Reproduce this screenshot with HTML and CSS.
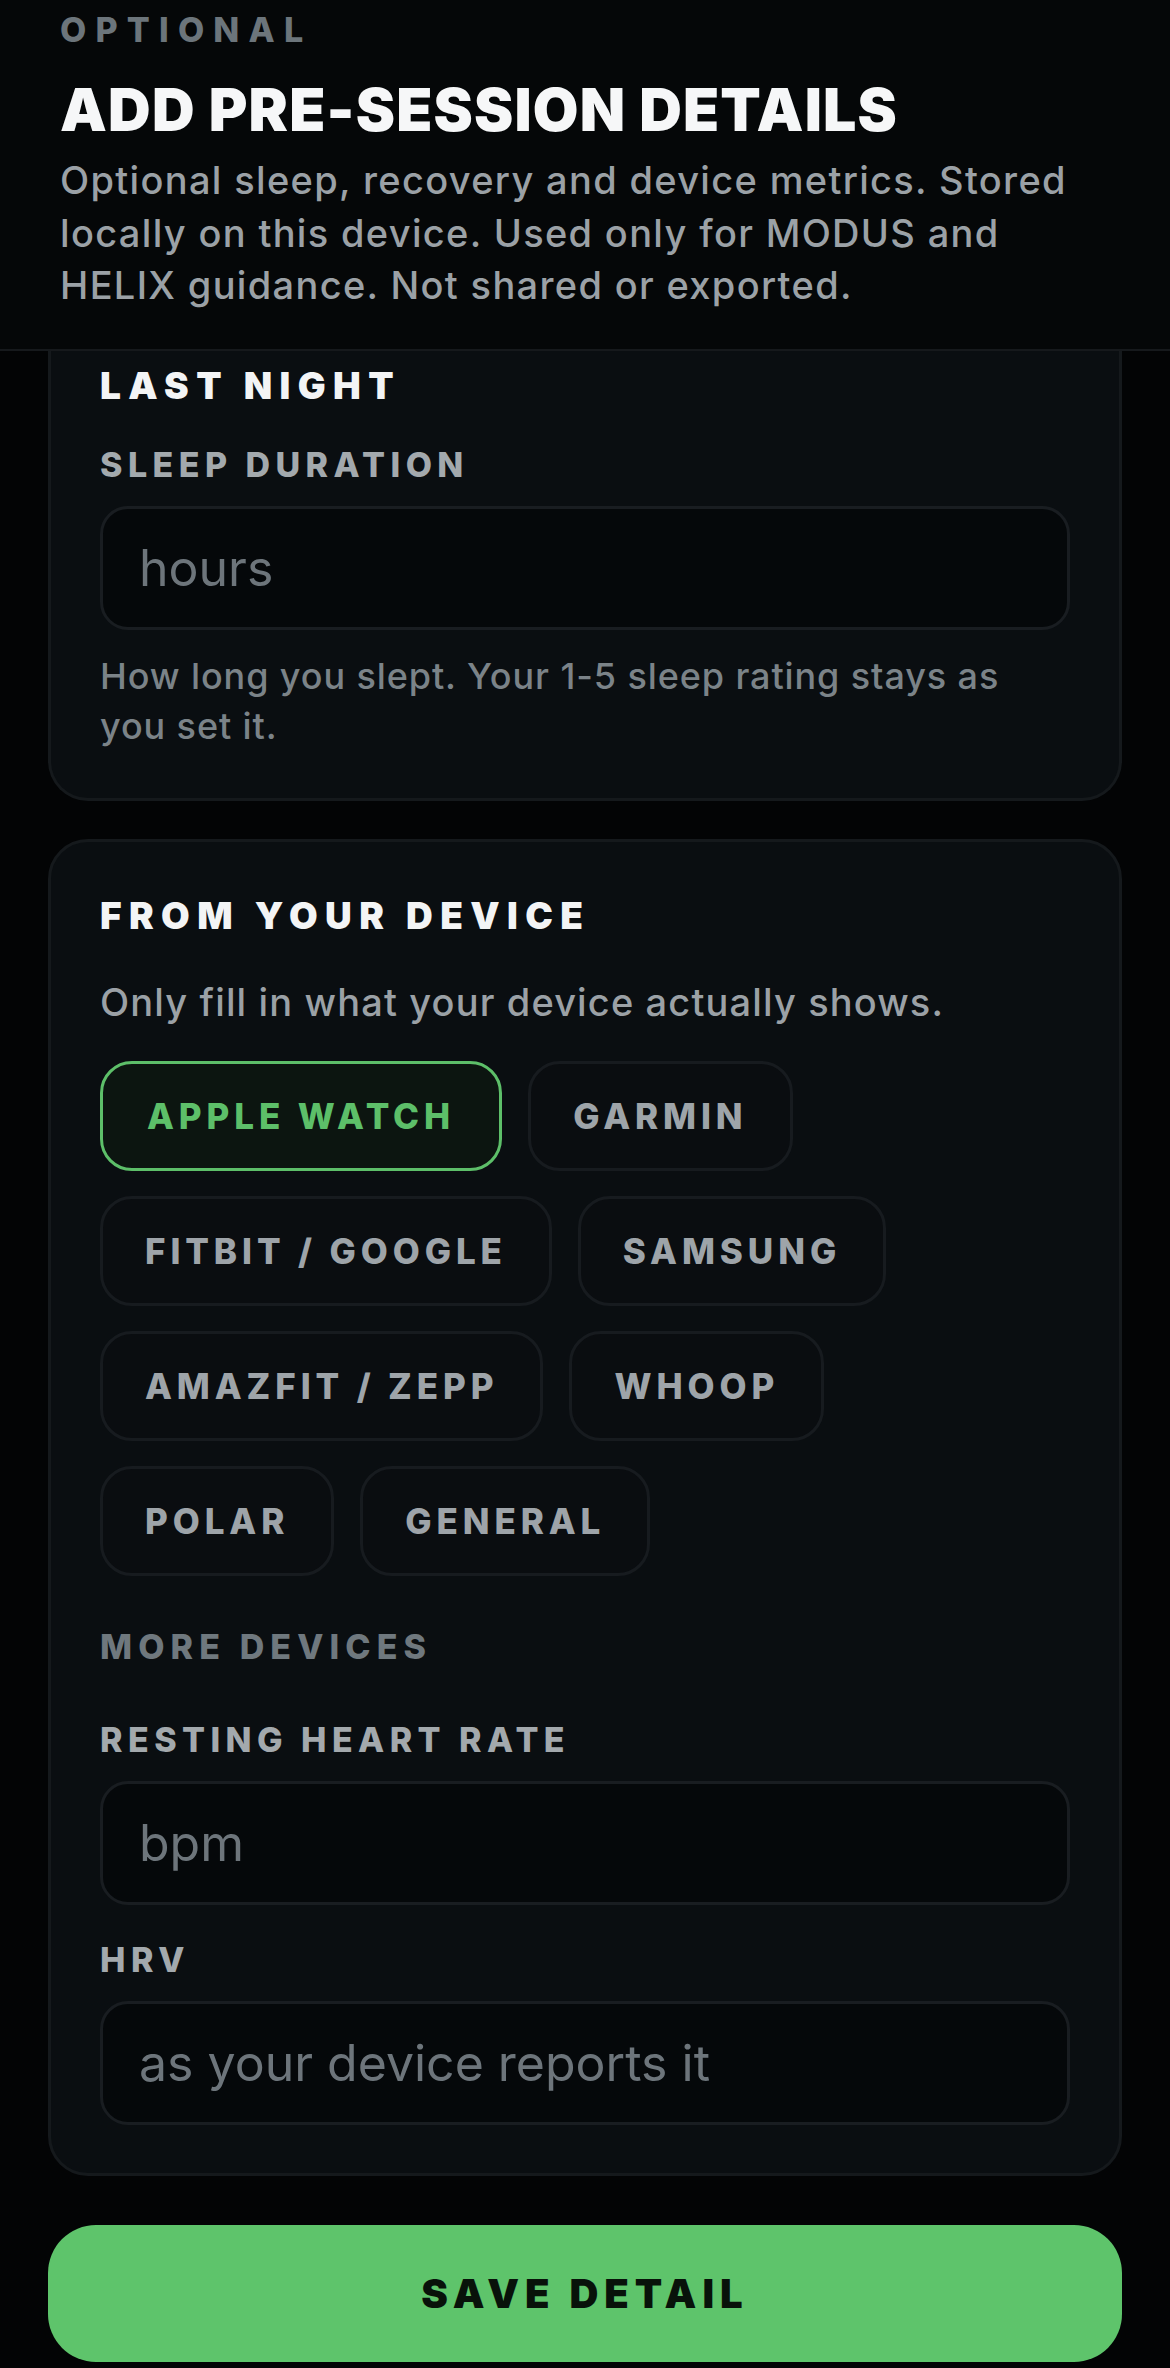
FILE: index.html
```html
<!DOCTYPE html>
<html lang="en">
<head>
<meta charset="utf-8">
<title>Add pre-session details</title>
<link rel="stylesheet" href="styles.css">
</head>
<body>
<div class="screen">
  <header class="top">
    <div class="eyebrow">OPTIONAL</div>
    <h1 class="title">ADD PRE-SESSION DETAILS</h1>
    <p class="intro">Optional sleep, recovery and device metrics. Stored locally on this device. Used only for MODUS and HELIX guidance. Not shared or exported.</p>
  </header>

  <main class="content">
    <section class="card card-cut">
      <h2 class="card-title">LAST NIGHT</h2>
      <div class="label">SLEEP DURATION</div>
      <div class="field"><span class="placeholder">hours</span></div>
      <p class="helper">How long you slept. Your 1-5 sleep rating stays as you set it.</p>
    </section>

    <section class="card">
      <h2 class="card-title">FROM YOUR DEVICE</h2>
      <p class="note">Only fill in what your device actually shows.</p>
      <div class="chips">
        <button class="chip chip-on">APPLE WATCH</button>
        <button class="chip">GARMIN</button>
        <button class="chip">FITBIT / GOOGLE</button>
        <button class="chip">SAMSUNG</button>
        <button class="chip">AMAZFIT / ZEPP</button>
        <button class="chip">WHOOP</button>
        <button class="chip">POLAR</button>
        <button class="chip">GENERAL</button>
      </div>
      <div class="sublabel">MORE DEVICES</div>
      <div class="label label-rhr">RESTING HEART RATE</div>
      <div class="field"><span class="placeholder">bpm</span></div>
      <div class="label label-hrv">HRV</div>
      <div class="field"><span class="placeholder">as your device reports it</span></div>
    </section>

    <button class="save">SAVE DETAIL</button>
  </main>
</div>
</body>
</html>
```

FILE: styles.css
```css
* {
  box-sizing: border-box;
}

html, body {
  margin: 0;
  padding: 0;
  background: #030405;
}

body {
  font-family: Inter, "Noto Sans", "Liberation Sans", sans-serif;
  color: #f3f4f5;
}

.screen {
  width: 1170px;
  min-height: 2368px;
  display: flex;
  flex-direction: column;
}

.top {
  background: #050708;
  border-bottom: 2px solid #16191c;
  padding: 10px 60px 37px;
}

.eyebrow {
  font-size: 34px;
  line-height: 40px;
  font-weight: 800;
  letter-spacing: 0.27em;
  color: #6c757b;
}

.title {
  margin: 25px 0 0;
  font-size: 59px;
  line-height: 70px;
  font-weight: 900;
  letter-spacing: 0.02em;
  color: #f6f7f8;
}

.intro {
  margin: 9px 0 0;
  font-size: 38px;
  line-height: 52.5px;
  font-weight: 500;
  letter-spacing: 0.035em;
  color: #9ba1a6;
}

.content {
  padding: 0 48px;
  display: flex;
  flex-direction: column;
}

.card {
  background: #0a0e11;
  border: 3px solid #15191c;
  border-radius: 40px;
  padding: 52px 49px 48px;
  display: flex;
  flex-direction: column;
}

.card-cut {
  border-top: none;
  border-top-left-radius: 0;
  border-top-right-radius: 0;
  padding-top: 13px;
  padding-bottom: 47px;
}

.card + .card {
  margin-top: 38px;
}

.card-title {
  margin: 0;
  font-size: 37px;
  line-height: 44px;
  font-weight: 900;
  letter-spacing: 0.2em;
  color: #f3f4f5;
}

.label {
  margin-top: 37px;
  font-size: 34px;
  line-height: 40px;
  font-weight: 800;
  letter-spacing: 0.16em;
  color: #a3a9ad;
}

.label-rhr {
  margin-top: 53px;
}

.label-hrv {
  margin-top: 35px;
}

.sublabel {
  margin-top: 51px;
  font-size: 34px;
  line-height: 40px;
  font-weight: 800;
  letter-spacing: 0.18em;
  color: #6f787e;
}

.field {
  margin-top: 21px;
  height: 124px;
  background: #05080a;
  border: 3px solid #191d21;
  border-radius: 28px;
  padding: 0 36px;
  display: flex;
  align-items: center;
}

.placeholder {
  font-size: 50px;
  font-weight: 400;
  color: #6d757b;
}

.helper {
  margin: 21px 0 0;
  font-size: 36px;
  line-height: 50px;
  font-weight: 500;
  letter-spacing: 0.025em;
  color: #7b8388;
}

.note {
  margin: 39px 0 0;
  font-size: 38px;
  line-height: 50px;
  font-weight: 500;
  letter-spacing: 0.03em;
  color: #9ba1a6;
}

.chips {
  margin-top: 34px;
  display: flex;
  flex-wrap: wrap;
  gap: 25px 26px;
  max-width: 900px;
}

.chip {
  height: 110px;
  padding: 0 42px;
  background: #0a0d10;
  border: 3px solid #171b1f;
  border-radius: 32px;
  font-family: Inter, "Noto Sans", "Liberation Sans", sans-serif;
  font-size: 35px;
  font-weight: 800;
  letter-spacing: 0.14em;
  color: #9ea4a9;
}

.chip-on {
  background: #0c1510;
  border-color: #5dbf69;
  color: #5dbf69;
  padding: 0 44px;
}

.save {
  margin-top: 49px;
  height: 137px;
  border: none;
  border-radius: 48px;
  background: #5ec46b;
  color: #08120a;
  font-family: Inter, "Noto Sans", "Liberation Sans", sans-serif;
  font-size: 40px;
  font-weight: 900;
  letter-spacing: 0.15em;
}
```
